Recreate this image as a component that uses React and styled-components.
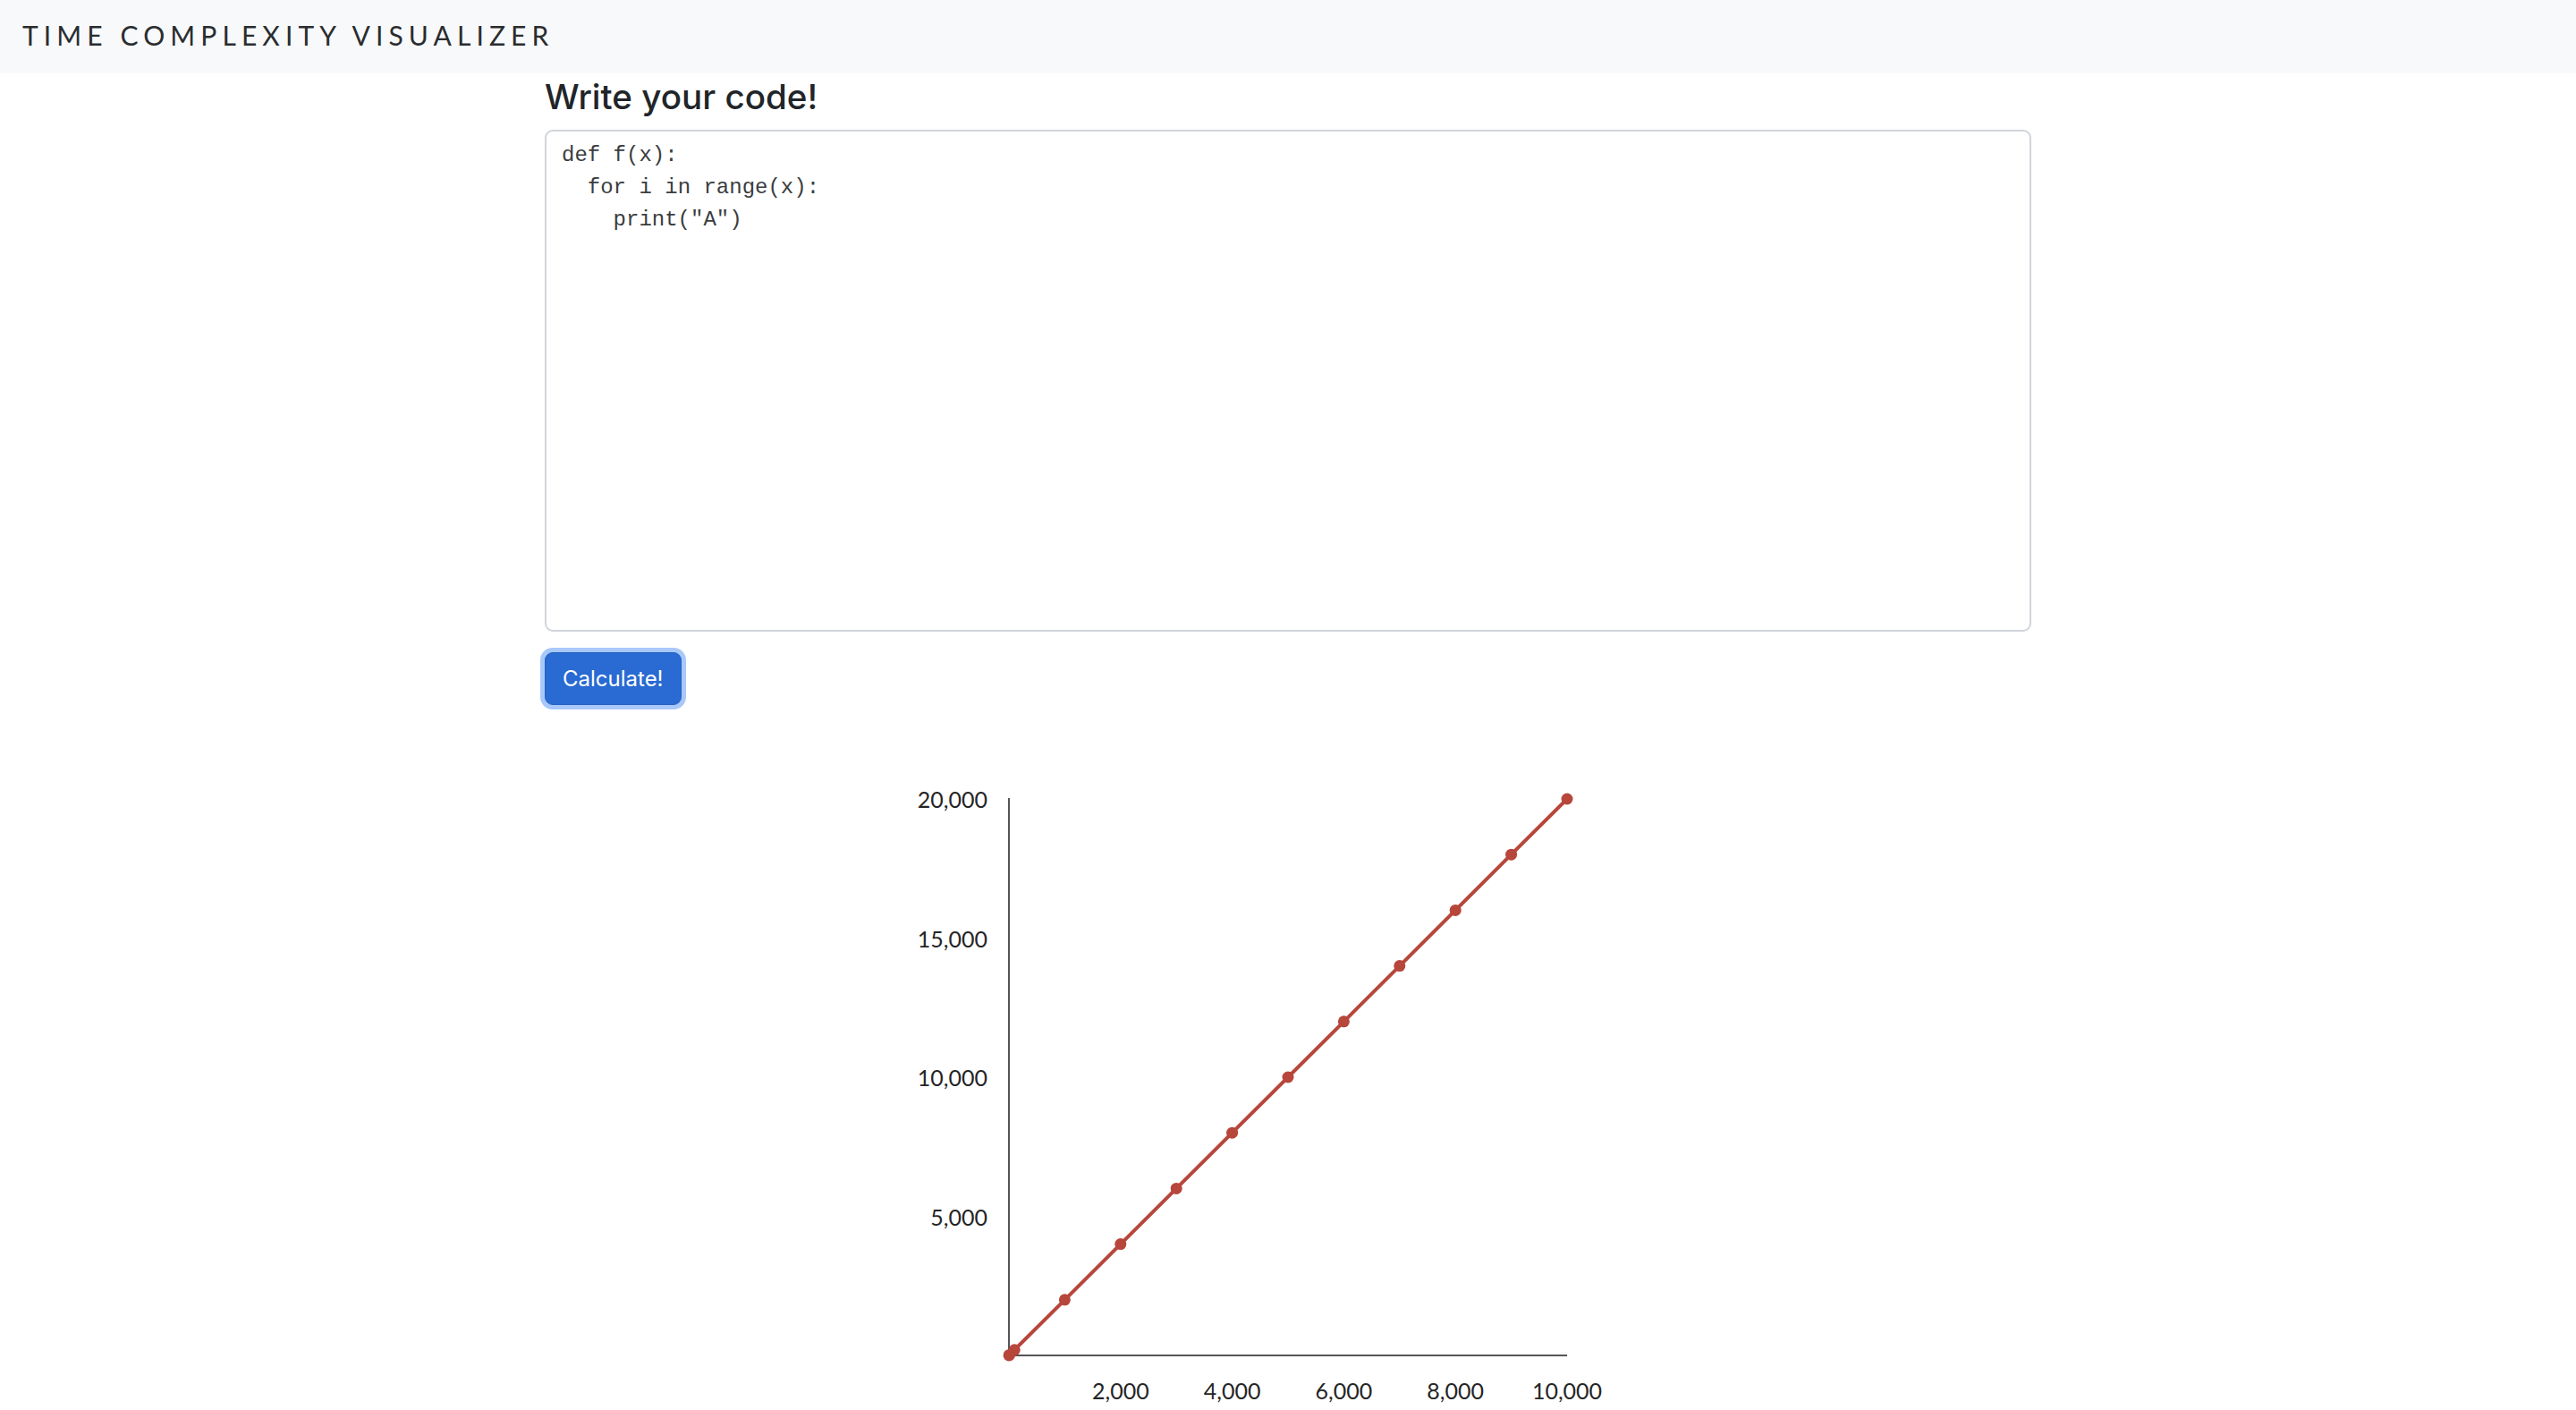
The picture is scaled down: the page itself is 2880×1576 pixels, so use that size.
import React from "react";
import styled, { createGlobalStyle } from "styled-components";

const GlobalStyle = createGlobalStyle`
  html, body {
    margin: 0;
    padding: 0;
    background: #ffffff;
    overflow: hidden;
  }
  body {
    font-family: Inter, "Noto Sans", sans-serif;
    color: #212529;
  }
`;

const Page = styled.div`
  display: flex;
  flex-direction: column;
  min-height: 1576px;
`;

const Navbar = styled.header`
  height: 82px;
  background: #f8f9fa;
  display: flex;
  align-items: center;
  padding-left: 25px;
  box-sizing: border-box;
`;

const Brand = styled.div`
  font-family: Lato, "Open Sans", sans-serif;
  font-size: 30px;
  font-weight: 400;
  letter-spacing: 6.1px;
  color: #2a2d30;
  line-height: 1;
  padding-bottom: 4px;
`;

const Container = styled.main`
  width: 1662px;
  margin: 0 auto;
  display: flex;
  flex-direction: column;
  align-items: flex-start;
`;

const Heading = styled.h4`
  font-family: Inter, "Noto Sans", sans-serif;
  font-size: 38.6px;
  font-weight: 500;
  line-height: 1.2;
  margin: 3px 0 14px;
  color: #212529;
`;

const CodeArea = styled.textarea`
  display: block;
  width: 100%;
  height: 561px;
  box-sizing: border-box;
  border: 2px solid #d1d5da;
  border-radius: 9px;
  padding: 9px 17px;
  font-family: "Liberation Mono", "Courier New", monospace;
  font-size: 24px;
  line-height: 36px;
  color: #3a3d40;
  background: #fff;
  resize: none;
  outline: none;
`;

const Button = styled.button`
  display: block;
  margin-top: 23px;
  height: 59px;
  padding: 0 19px;
  box-sizing: border-box;
  background: #296ad3;
  border: 1.5px solid #2360c4;
  border-radius: 9px;
  box-shadow: 0 0 0 5px #a8c8fa;
  color: #ffffff;
  font-family: Inter, "Noto Sans", sans-serif;
  font-size: 24px;
  font-weight: 400;
  line-height: 36px;
  cursor: pointer;
`;

const ChartWrap = styled.section`
  margin-top: 52px;
  align-self: center;
  display: flex;
  justify-content: center;
`;

const ChartSvg = styled.svg`
  display: block;
  overflow: visible;
`;

const TickLabel = styled.text`
  font-family: Lato, "Open Sans", sans-serif;
  font-size: 25px;
  fill: #252525;
`;

const W = 900;
const H = 730;
const LEFT = 138;
const PLOT_W = 624;
const TOP = 53;
const BOTTOM = 675;
const X_MAX = 10000;
const Y_MAX = 20000;

const sx = (x) => LEFT + (x / X_MAX) * PLOT_W;
const sy = (y) => BOTTOM - (y / Y_MAX) * (BOTTOM - TOP);

const xs = [1, 10, 100, 1000, 2000, 3000, 4000, 5000, 6000, 7000, 8000, 9000, 10000];
const data = xs.map((x) => ({ x, y: 2 * x }));

const fmt = (n) => n.toLocaleString("en-US");

function Chart() {
  const pts = data.map((d) => `${sx(d.x)},${sy(d.y)}`).join(" ");
  return (
    <ChartSvg width={W} height={H} viewBox={`0 0 ${W} ${H}`}>
      <line x1={LEFT} y1={TOP - 1} x2={LEFT} y2={BOTTOM} stroke="#555" strokeWidth="2" />
      <line x1={LEFT} y1={BOTTOM} x2={LEFT + PLOT_W} y2={BOTTOM} stroke="#555" strokeWidth="2" />
      {[5000, 10000, 15000, 20000].map((v) => (
        <TickLabel key={v} x={LEFT - 24} y={sy(v)} textAnchor="end" dominantBaseline="central">
          {fmt(v)}
        </TickLabel>
      ))}
      {[2000, 4000, 6000, 8000, 10000].map((v) => (
        <TickLabel key={v} x={sx(v)} y={BOTTOM + 39} textAnchor="middle" dominantBaseline="central">
          {fmt(v)}
        </TickLabel>
      ))}
      <polyline points={pts} fill="none" stroke="#b7463b" strokeWidth="4" strokeLinejoin="round" />
      {data.map((d) => (
        <circle key={d.x} cx={sx(d.x)} cy={sy(d.y)} r="6.5" fill="#b7463b" />
      ))}
    </ChartSvg>
  );
}

const code = `def f(x):
  for i in range(x):
    print("A")`;

export default function App() {
  return (
    <Page>
      <GlobalStyle />
      <Navbar>
        <Brand>TIME COMPLEXITY VISUALIZER</Brand>
      </Navbar>
      <Container>
        <Heading>Write your code!</Heading>
        <CodeArea defaultValue={code} spellCheck={false} />
        <Button type="button">Calculate!</Button>
        <ChartWrap>
          <Chart />
        </ChartWrap>
      </Container>
    </Page>
  );
}
